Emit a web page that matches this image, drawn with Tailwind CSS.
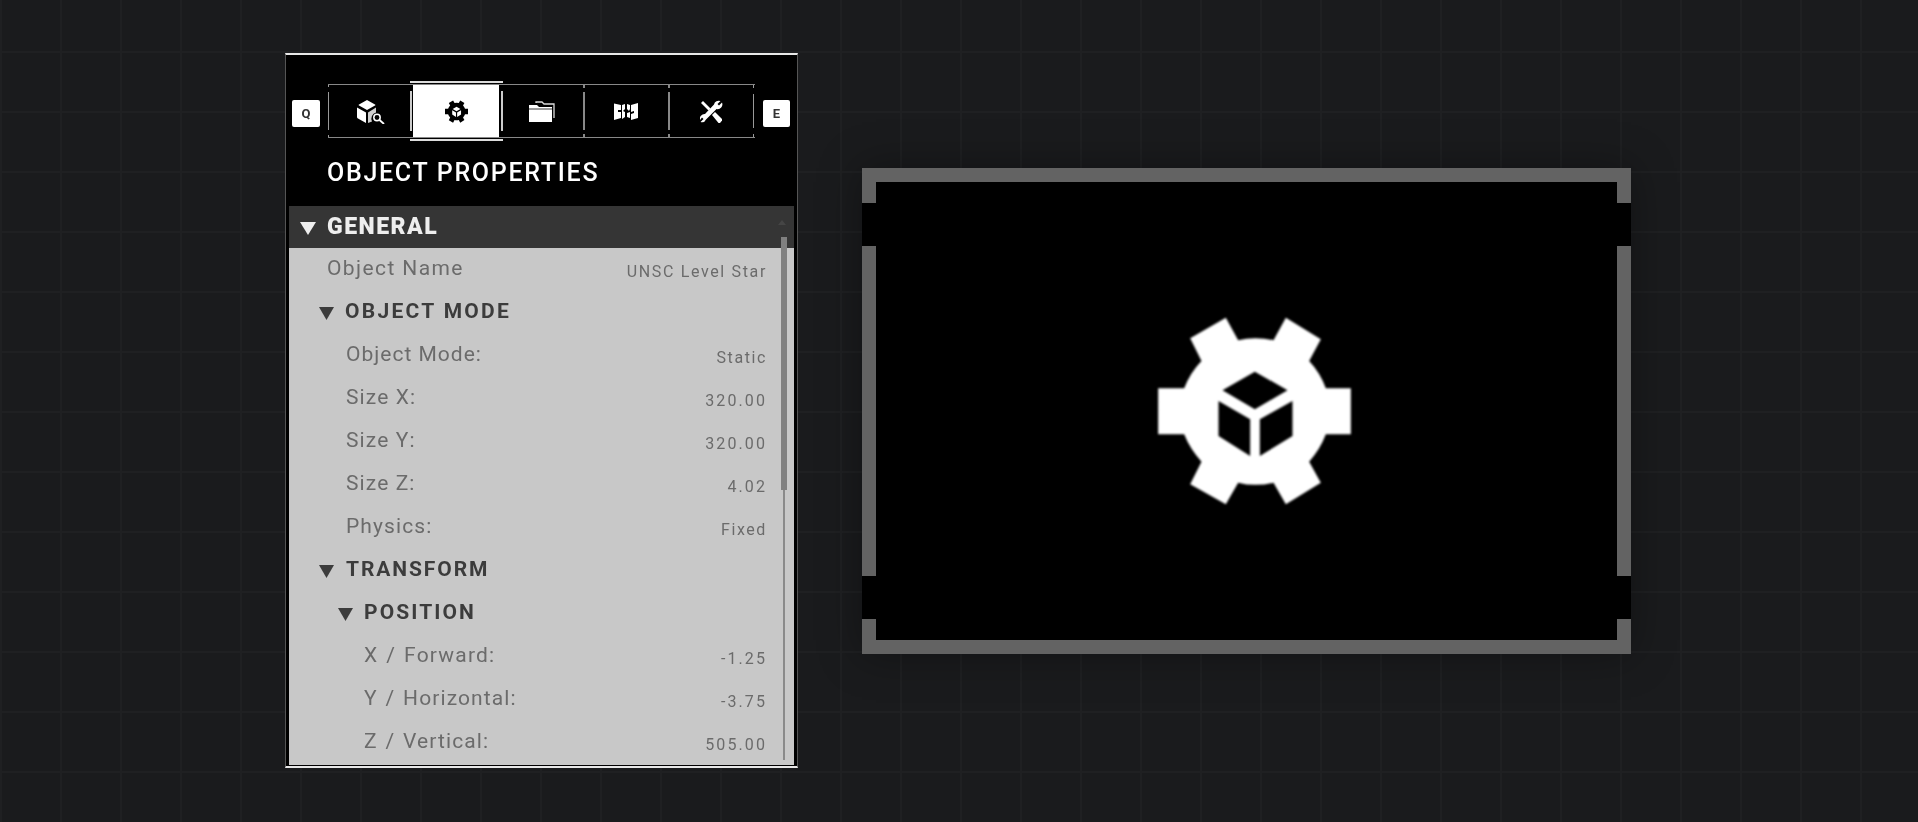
<!doctype html>
<html>
<head>
<meta charset="utf-8">
<script src="https://cdn.jsdelivr.net/npm/@tailwindcss/browser@4"></script>
</head>
<body class="m-0 w-[1918px] h-[822px] overflow-hidden bg-[#1a1b1d] bg-[linear-gradient(#1f2022_2px,transparent_2px),linear-gradient(90deg,#1f2022_2px,transparent_2px)] bg-[size:60px_60px] bg-[position:0px_51px] font-['Roboto',sans-serif]">
<main class="flex items-start pl-[285px] pt-[53px] gap-[64px]">
  <!-- panel -->
  <section class="relative w-[513px] h-[715px] bg-black border-x border-x-[#555] border-t-2 border-t-[#e8e8e8] border-b-2 border-b-[#e8e8e8] pb-[1px] flex flex-col blur-[0.4px]">
    <div class="h-[151px] shrink-0 flex flex-col">
      <div class="h-[29px] shrink-0"></div>
      <div class="flex items-center h-[59px] pl-[6px] pr-[6px]">
        <div class="w-[28px] h-[27px] bg-white rounded-[2px] flex items-center justify-center text-[13px] font-bold text-[#333] shrink-0">Q</div>
        <div class="w-[8px] shrink-0"></div>
        <div class="relative flex w-[427px] h-[54px] mb-[5px] border-y border-[#888] shrink-0">
          <div class="relative w-[85px] h-full flex items-center justify-center">
            <span class="absolute left-0 top-[7px] bottom-[7px] w-px bg-[#999]"></span>
            <span class="absolute left-0 top-0 h-[2px] w-px bg-[#999]"></span>
            <span class="absolute left-0 bottom-0 h-[2px] w-px bg-[#999]"></span>
            <svg width="28" height="25" viewBox="0 0 28 25" fill="#fff">
              <path d="M10 1l8 4.500q1 .5 0 1L10 11 2 6.500q-1-.5 0-1z"/><path d="M0 8.500l9 5V24l-8-4.500q-1-.5-1-1.500z"/><path d="M11 13.500l8-5v5a6.500 6.500 0 0 0-4 9L11 24z" fill="#cfcfcf"/>
              <circle cx="20" cy="18.500" r="3.200" fill="none" stroke="#fff" stroke-width="1.500"/><path d="M22.500 21L27 25" stroke="#fff" stroke-width="1.800"/>
            </svg>
          </div>
          <div class="relative w-[86px] h-full bg-white flex items-center justify-center">
            <div class="absolute -left-[3px] -right-[4px] -top-[4px] -bottom-[4px] border-y-2 border-[#ddd]"></div>
            <div class="absolute -left-[3px] top-[6px] bottom-[6px] w-[2px] bg-[#ccc]"></div>
            <div class="absolute -right-[4px] top-[6px] bottom-[6px] w-[2px] bg-[#ccc]"></div>
            <svg width="23" height="23" viewBox="82 45 578 567" fill="#000" fill-rule="evenodd">
              <path d="M82 262H160Q178 215 212 180L178 112 285 50 322 118Q372 105 428 118L465 50 570 115 535 180Q568 215 585 262H660V400H585Q568 445 535 482L570 545 465 610 428 545Q372 558 322 545L285 610 178 550 212 482Q178 445 160 400H82Z M372 212L470 268 372 325 275 268Z M263 300L358 355V465L263 405Z M387 355L485 300V405L387 465Z"/>
            </svg>
          </div>
          <div class="relative w-[84px] h-full flex items-center justify-center">
            <svg width="26" height="21" viewBox="0 0 26 21" fill="none" class="translate-x-[1px]">
              <path d="M7 2V1h6l2 2h10v14" stroke="#ddd" stroke-width="1.300"/>
              <path d="M0 4h8l2 2h13v15H0z" fill="#fff"/><path d="M0 8h23" stroke="#000" stroke-width=".8"/>
            </svg>
          </div>
          <div class="relative w-[85px] h-full flex items-center justify-center">
            <span class="absolute left-0 top-[7px] bottom-[7px] w-[2px] bg-[#888]"></span>
            <span class="absolute left-0 top-0 h-[3px] w-[2px] bg-[#888]"></span>
            <span class="absolute left-0 bottom-0 h-[3px] w-[2px] bg-[#888]"></span>
            <svg width="24" height="19" viewBox="0 0 24 19" fill="#fff">
              <path d="M0 1.500l7 1.500v5L4 8v2l3 0v6l-7 2z"/><path d="M8 3l3-1v5L9 9l2 1v5l-3 2z"/><path d="M13 2l3 1v4l-1 2-2-2z"/><path d="M13 11l3-1v6l-3-1z"/><path d="M17 3l7-2v15l-7 2v-6l3-1v-2l-3 1z"/>
            </svg>
          </div>
          <div class="relative w-[86px] h-full flex items-center justify-center">
            <span class="absolute left-0 top-[7px] bottom-[7px] w-[2px] bg-[#888]"></span>
            <span class="absolute left-0 top-0 h-[3px] w-[2px] bg-[#888]"></span>
            <span class="absolute left-0 bottom-0 h-[3px] w-[2px] bg-[#888]"></span>
            <span class="absolute right-0 top-[9px] bottom-[9px] w-px bg-[#999]"></span>
            <span class="absolute right-0 top-0 h-[3px] w-px bg-[#999]"></span>
            <span class="absolute right-0 bottom-0 h-[3px] w-px bg-[#999]"></span>
            <svg width="23" height="23" viewBox="0 0 23 23" fill="#fff">
              <path d="M1 3l2-2 7.500 7.500-2 2z"/>
              <path d="M12 15l3-3 7 7v1.500L20 23h-1.500z"/>
              <path d="M14 4.500A4.800 4.800 0 0 1 20.500 1l-3 3 1.500 1.500 3-3a4.800 4.800 0 0 1-5.500 6.500L6 19.500A4.500 4.500 0 0 1 .5 22l3-3L2 17.500l-2 2.500a4.800 4.800 0 0 1 5-6z"/>
            </svg>
          </div>
        </div>
        <div class="w-[8px] shrink-0"></div>
        <div class="w-[27px] h-[27px] bg-white rounded-[2px] flex items-center justify-center text-[13px] font-bold text-[#333] shrink-0">E</div>
      </div>
      <h1 class="pl-[41px] pt-[14px] text-[25px] leading-[32px] font-medium tracking-[1.7px] text-white whitespace-nowrap">OBJECT PROPERTIES</h1>
    </div>
    <div class="mx-[3px] flex items-center h-[42px] shrink-0 bg-[#353535] pl-[11px]">
      <svg width="16" height="14" viewBox="0 0 16 14" class="mt-[2px]"><path d="M0 1h16L8 14z" fill="#eee"/></svg>
      <span class="ml-[11px] text-[23px] font-black tracking-[1.5px] text-[#eee]">GENERAL</span>
    </div>
    <div class="mx-[3px] flex-1 bg-[#c8c8c8] overflow-hidden text-[#6b6b6b]">
      <div class="flex items-center justify-between h-[43px] pb-[2px] pl-[38px] pr-[27px]"><span class="text-[21px] tracking-[1.4px]">Object Name</span><span class="text-[16px] tracking-[1.65px] pt-[6px]">UNSC Level Star</span></div>
      <div class="flex items-center h-[43px] pb-[2px] pl-[30px] text-[#3c3c3c]"><svg width="15" height="14" viewBox="0 0 15 14" class="mt-[2px]"><path d="M0 1h15L7.500 14z" fill="#3c3c3c"/></svg><span class="ml-[11px] text-[21px] font-bold tracking-[2.3px]">OBJECT MODE</span></div>
      <div class="flex items-center justify-between h-[43px] pb-[2px] pl-[57px] pr-[27px]"><span class="text-[21px] tracking-[1px]">Object Mode:</span><span class="text-[16px] tracking-[1.6px] pt-[6px]">Static</span></div>
      <div class="flex items-center justify-between h-[43px] pb-[2px] pl-[57px] pr-[27px]"><span class="text-[21px] tracking-[1.1px]">Size X:</span><span class="text-[16px] tracking-[2.1px] pt-[6px]">320.00</span></div>
      <div class="flex items-center justify-between h-[43px] pb-[2px] pl-[57px] pr-[27px]"><span class="text-[21px] tracking-[1.1px]">Size Y:</span><span class="text-[16px] tracking-[2.1px] pt-[6px]">320.00</span></div>
      <div class="flex items-center justify-between h-[43px] pb-[2px] pl-[57px] pr-[27px]"><span class="text-[21px] tracking-[1.1px]">Size Z:</span><span class="text-[16px] tracking-[2.1px] pt-[6px]">4.02</span></div>
      <div class="flex items-center justify-between h-[43px] pb-[2px] pl-[57px] pr-[27px]"><span class="text-[21px] tracking-[1.1px]">Physics:</span><span class="text-[16px] tracking-[1.6px] pt-[6px]">Fixed</span></div>
      <div class="flex items-center h-[43px] pb-[2px] pl-[30px] text-[#3c3c3c]"><svg width="15" height="14" viewBox="0 0 15 14" class="mt-[2px]"><path d="M0 1h15L7.500 14z" fill="#3c3c3c"/></svg><span class="ml-[12px] text-[21px] font-bold tracking-[1.9px]">TRANSFORM</span></div>
      <div class="flex items-center h-[43px] pb-[2px] pl-[49px] text-[#3c3c3c]"><svg width="15" height="14" viewBox="0 0 15 14" class="mt-[2px]"><path d="M0 1h15L7.500 14z" fill="#3c3c3c"/></svg><span class="ml-[11px] text-[21px] font-bold tracking-[2.1px]">POSITION</span></div>
      <div class="flex items-center justify-between h-[43px] pb-[2px] pl-[75px] pr-[27px]"><span class="text-[21px] tracking-[1.2px] [word-spacing:1.5px]">X / Forward:</span><span class="text-[16px] tracking-[2.1px] pt-[6px]">-1.25</span></div>
      <div class="flex items-center justify-between h-[43px] pb-[2px] pl-[75px] pr-[27px]"><span class="text-[21px] tracking-[1.1px] [word-spacing:1.5px]">Y / Horizontal:</span><span class="text-[16px] tracking-[2.1px] pt-[6px]">-3.75</span></div>
      <div class="flex items-center justify-between h-[43px] pb-[2px] pl-[75px] pr-[27px]"><span class="text-[21px] tracking-[1.1px] [word-spacing:1.5px]">Z / Vertical:</span><span class="text-[16px] tracking-[2.1px] pt-[6px]">505.00</span></div>
    </div>
    <div class="absolute right-[12px] top-[193px] bottom-[6px] w-[2px] bg-[#8a8a8a]"></div>
    <div class="absolute right-[10px] top-[182px] h-[253px] w-[6px] bg-[#808080]"></div>
    <div class="absolute right-[11px] top-[165px] w-0 h-0 border-x-[4px] border-x-transparent border-b-[5px] border-b-[#454545]"></div>
  </section>
  <!-- preview -->
  <section class="relative mt-[115px] w-[769px] h-[486px] bg-black border-[14px] border-[#636363] shadow-[0_0_40px_rgba(0,0,0,0.35)] flex items-center justify-center">
    <div class="absolute -left-[14px] top-[21px] w-[14px] h-[43px] bg-black"></div>
    <div class="absolute -left-[14px] bottom-[21px] w-[14px] h-[43px] bg-black"></div>
    <div class="absolute -right-[14px] top-[21px] w-[14px] h-[43px] bg-black"></div>
    <div class="absolute -right-[14px] bottom-[21px] w-[14px] h-[43px] bg-black"></div>
    <svg width="193" height="189" viewBox="82 45 578 567" fill="#fff" fill-rule="evenodd" class="blur-[1px] translate-x-[8px] -translate-y-[1px]">
      <path d="M82 262H160Q178 215 212 180L178 112 285 50 322 118Q372 105 428 118L465 50 570 115 535 180Q568 215 585 262H660V400H585Q568 445 535 482L570 545 465 610 428 545Q372 558 322 545L285 610 178 550 212 482Q178 445 160 400H82Z M372 212L470 268 372 325 275 268Z M263 300L358 355V465L263 405Z M387 355L485 300V405L387 465Z"/>
    </svg>
  </section>
</main>
</body>
</html>
